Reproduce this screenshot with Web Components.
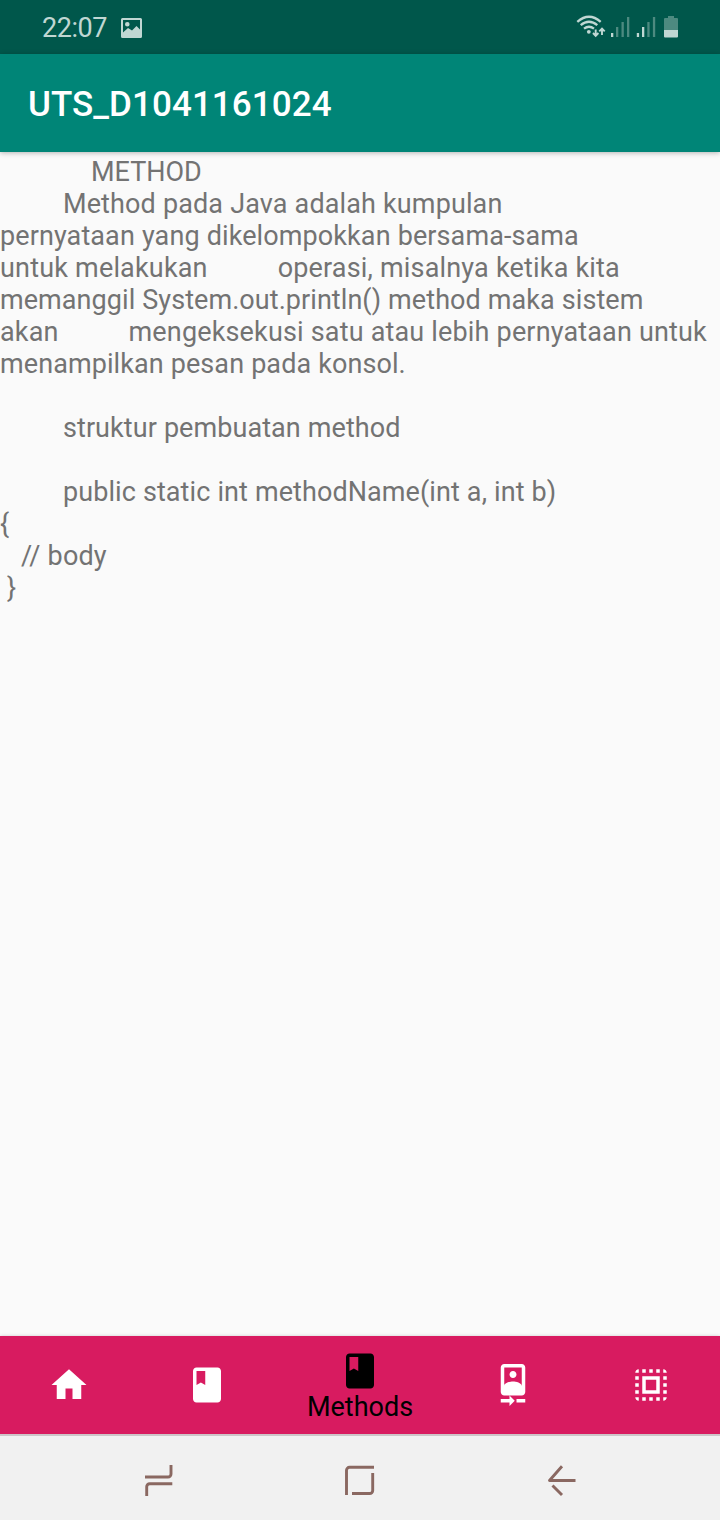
<!DOCTYPE html>
<html lang="id">
<head>
<meta charset="utf-8">
<title>UTS_D1041161024</title>
<style>
html,body{margin:0;height:100%}
body{font-family:Roboto,"Liberation Sans",sans-serif;background:#fafafa;overflow:hidden}
</style>
</head>
<body>
<phone-screen>
  <status-bar slot="top" time="22:07"></status-bar>
  <app-bar slot="top">UTS_D1041161024</app-bar>
  <text-page></text-page>
  <bottom-nav slot="bottom">
    <nav-item icon="home"></nav-item>
    <nav-item icon="book"></nav-item>
    <nav-item icon="book" active>Methods</nav-item>
    <nav-item icon="camera"></nav-item>
    <nav-item icon="select"></nav-item>
  </bottom-nav>
  <system-keys slot="bottom"></system-keys>
</phone-screen>
<script>
class Base extends HTMLElement {
  connectedCallback() {
    if (!this.shadowRoot) this.attachShadow({mode: 'open'}).innerHTML = this.view();
  }
}
customElements.define('phone-screen', class extends Base {
  view() { return `<style>
    :host{display:flex;flex-direction:column;width:720px;height:1520px;background:#fafafa}
    main{flex:1;min-height:0}
    </style><slot name="top"></slot><main><slot></slot></main><slot name="bottom"></slot>`; }
});
customElements.define('status-bar', class extends Base {
  view() { return `<style>
    :host{display:flex;justify-content:space-between;height:54px;background:#00574b;color:#c0d7d3;flex:none}
    .left{display:flex;align-items:center;padding-left:42px}
    time{font-size:27px;line-height:54px;width:66px;margin-right:12px;white-space:nowrap;padding-top:2px;letter-spacing:-.45px}
    svg{display:block}
    </style>
    <div class="left"><time>${this.getAttribute('time')}</time>
      <svg width="24" height="54" viewBox="120 0 24 54"><path fill="currentColor" fill-rule="evenodd" d="M122.5 18h18a1.5 1.5 0 0 1 1.500 1.500v17a1.500 1.500 0 0 1-1.500 1.500h-18a1.500 1.500 0 0 1-1.500-1.500v-17a1.500 1.500 0 0 1 1.500-1.500zM123 20v12.500l5-4.500 4 2.500 4.500-4.500 3.500 3.500V20zM127.300 22a2.300 2.300 0 1 1 0 4.600 2.300 2.300 0 0 1 0-4.600z"/></svg></div>
    <svg width="160" height="54" viewBox="560 0 160 54" fill="none">
      <g stroke="currentColor" stroke-width="2.300"><path d="M577.300 21.800Q589 11.700 600.700 21.800M580.700 25.200Q589 18.300 597.300 25.200M584 28.600Q589 24.800 594 28.600"/>
      <path stroke-width="1.900" d="M595.700 29.500v6M593 33l2.700 2.800 2.700-2.800M602 35v-6M599.300 31.300l2.700-2.800 2.700 2.800"/></g>
      <circle cx="588.800" cy="31.800" r="1.900" fill="currentColor"/>
      <g fill="#4d8a80"><path d="M616 27h2.300v10H616zM621.500 22h2.300v15h-2.300zM627 17h2.300v20H627zM647.300 22h2.300v15h-2.300zM652.900 17h2.300v20h-2.300z"/>
      <path d="M668 16h6v2h3a1 1 0 0 1 1 1v11h-14V19a1 1 0 0 1 1-1h3z"/></g>
      <path fill="currentColor" d="M611 33h2.300v4H611zM636.800 33h2.300v4h-2.300zM642 27h2.300v10H642zM664 30h14v6.500a1 1 0 0 1-1 1h-12a1 1 0 0 1-1-1z"/>
    </svg>`; }
});
customElements.define('app-bar', class extends Base {
  view() { return `<style>
    :host{display:flex;align-items:center;height:98px;flex:none;box-sizing:border-box;padding:2px 28px 0;background:#008577;color:#fff;font-size:35px;font-weight:500;line-height:41px;letter-spacing:.07px;box-shadow:0 1px 5px rgba(0,0,0,.28);z-index:1}
    </style><slot></slot>`; }
});
customElements.define('text-page', class extends Base {
  view() {
    // leading spaces, text, letter tracking in px
    const lines = [
      [13, 'METHOD', 0], [9, 'Method pada Java adalah kumpulan', .12],
      [0, 'pernyataan yang dikelompokkan bersama-sama', .1],
      [0, 'untuk melakukan          operasi, misalnya ketika kita', .17],
      [0, 'memanggil System.out.println() method maka sistem', .06],
      [0, 'akan          mengeksekusi satu atau lebih pernyataan untuk', .15],
      [0, 'menampilkan pesan pada konsol.', .08], [0, '', 0],
      [9, 'struktur pembuatan method', .07], [0, '', 0],
      [9, 'public static int methodName(int a, int b)', .08],
      [0, '{', 0], [3, '// body', .15], [1, '}', 0]];
    return `<style>
    :host{display:block;padding-top:4px;color:#737373;font-size:27px}
    p{margin:0;height:32px;line-height:32px;white-space:pre;letter-spacing:var(--t);word-spacing:calc(.3px - var(--t))}
    </style>${lines.map(([n, t, s]) => `<p style="--t:${s}px">${' '.repeat(n)}${t}</p>`).join('')}`;
  }
});
customElements.define('bottom-nav', class extends Base {
  view() { return `<style>
    :host{display:flex;height:98px;flex:none;background:#d81b60;box-shadow:0 1px 4px rgba(0,0,0,.3);position:relative}
    </style><slot></slot>`; }
});
const ICONS = {
  home: 'M10 20v-6h4v6h5v-8h3L12 3 2 12h3v8z',
  book: 'M18 2H6c-1.100 0-2 .9-2 2v16c0 1.100.9 2 2 2h12c1.100 0 2-.9 2-2V4c0-1.100-.9-2-2-2zM6 4h5v8l-2.500-1.500L6 12V4z',
  camera: 'M10 20H5v2h5v2l3-3-3-3v2zm4 0v2h5v-2h-5zM12 8c1.100 0 2-.9 2-2s-.9-2-2-2-1.990.9-1.990 2S10.900 8 12 8zm5-8H7C5.900 0 5 .9 5 2v14c0 1.100.9 2 2 2h10c1.100 0 2-.9 2-2V2c0-1.100-.9-2-2-2zM7 2h10v10.500c0-1.670-3.330-2.500-5-2.500s-5 .83-5 2.500V2z',
  select: 'M3 5h2V3c-1.100 0-2 .9-2 2zm0 8h2v-2H3v2zm4 8h2v-2H7v2zM3 9h2V7H3v2zm10-6h-2v2h2V3zm6 0v2h2c0-1.100-.9-2-2-2zM5 21v-2H3c0 1.100.9 2 2 2zm-2-4h2v-2H3v2zM9 3H7v2h2V3zm2 18h2v-2h-2v2zm8-8h2v-2h-2v2zm0 8c1.100 0 2-.9 2-2h-2v2zm0-12h2V7h-2v2zm0 8h2v-2h-2v2zm-4 4h2v-2h-2v2zm0-16h2V3h-2v2zM7 17h10V7H7v10zm2-8h6v6H9V9z'
};
customElements.define('nav-item', class extends Base {
  view() { return `<style>
    :host{display:flex;flex-direction:column;align-items:center;width:138px;padding-top:28px;box-sizing:border-box;color:#fff}
    :host([active]){width:168px;padding-top:14px;color:#000}
    svg{display:block;flex:none}
    .label{font-size:27px;line-height:30px;white-space:nowrap}
    </style><svg width="42" height="42" viewBox="0 0 24 24" fill="currentColor"><path d="${ICONS[this.getAttribute('icon')]}"/></svg>
    <span class="label"><slot></slot></span>`; }
});
customElements.define('system-keys', class extends Base {
  view() { return `<style>
    :host{display:block;height:86px;flex:none;background:#f1f1f1;box-shadow:inset 0 2px #cdc5c8;position:relative}
    svg{display:block}
    </style><svg width="720" height="86" viewBox="0 1434 720 86" fill="none" stroke="#8a6861" stroke-width="2.900">
      <path d="M145 1477h23a3 3 0 0 0 3-3v-9M172.300 1483.700h-22.600a3 3 0 0 0-3 3v9.300"/>
      <path d="M374 1467.300h-24.500a3 3 0 0 0-3 3V1495M372.700 1473v17.500a3 3 0 0 1-3 3H352"/>
      <path stroke-linejoin="round" d="M575.500 1480.500H549.500L562 1466.300M552.500 1485.500l9.500 9.500"/>
    </svg>`; }
});
</script>
</body>
</html>
